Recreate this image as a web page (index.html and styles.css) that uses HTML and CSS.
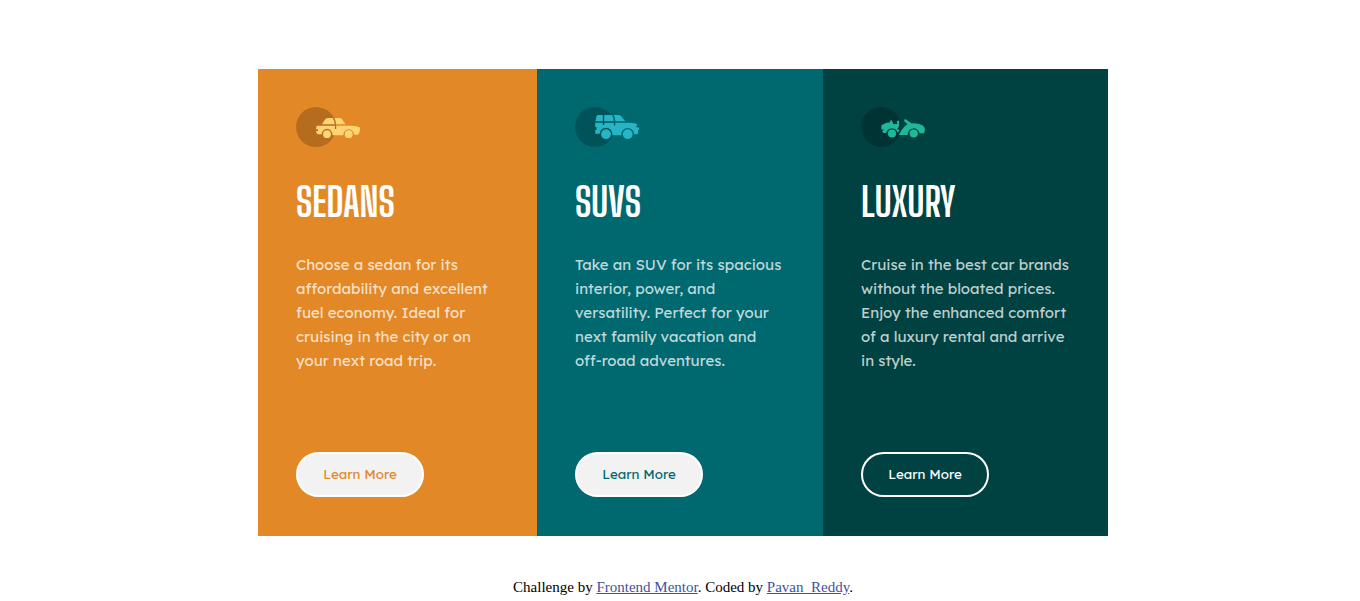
FILE: index.html
```html
<!DOCTYPE html>
<html lang="en">
<head>
<meta charset="UTF-8">
<meta name="viewport" content="width=device-width, initial-scale=1">
<title>3-column preview card</title>
<link rel="stylesheet" href="styles.css">
</head>
<body>
<main class="cards">
  <section class="card sedans">
    <svg class="icon" width="64" height="40" viewBox="0 0 64 40" aria-hidden="true">
      <circle cx="20" cy="20" r="20" fill="#000" opacity=".2"/>
      <g fill="#ffd473">
        <path d="M26 17.3 29 12.6Q30 11 32 11H36.6Q38.5 13.5 38.7 17.3ZM38.6 11H43.5Q45.3 11 46.3 12.5L49.4 17.3H40.2Q40.2 14 38.6 11ZM20.6 18.8H38.9V22H40.3V18.8H56Q61 19 63.3 20.2Q64.5 21 64 22.5L63 26.5Q62.7 27.7 61 27.7H58.1A5.4 5.4 0 0 0 47.3 27.7V28.3H36.4V27.2A5.4 5.4 0 0 0 25.6 27.2H22Q20.5 26.7 20.2 25V24H22V22.3H20Z"/>
        <circle cx="31" cy="27.2" r="3.9"/><circle cx="52.7" cy="27.2" r="3.9"/>
      </g>
    </svg>
    <h1 class="title">SEDANS</h1>
    <p class="text">Choose a sedan for its affordability and excellent fuel economy. Ideal for cruising in the city or on your next road trip.</p>
    <button class="more" type="button">Learn More</button>
  </section>
  <section class="card suvs">
    <svg class="icon" width="64" height="40" viewBox="0 0 64 40" aria-hidden="true">
      <circle cx="20" cy="20" r="20" fill="#000" opacity=".2"/>
      <g fill="#26b5c4">
        <path d="M22.7 8H27.8V14.2H20.5L21.5 9.5Q21.8 8 22.7 8ZM29.2 8H36.8Q38.6 10.5 38.8 14.2H29.2ZM38.6 8H43.5Q45 8 46 9L50.3 14.2H40.3Q40.3 10.5 38.6 8ZM20.2 15.8H27.8V18H29.2V15.8H38.9V18.5H40.3V15.8H55Q60 16 62.5 17.3L61.5 18.5V20.5H64V23H63V26Q63 27.3 61.5 27.3H59A6.3 6.3 0 0 0 46.4 27.3V28.3H37.3V27.2A6.3 6.3 0 0 0 24.7 26.7H20.2V23H21.5V20H20.2Z"/>
        <circle cx="31" cy="27.2" r="4.9"/><circle cx="52.7" cy="27.2" r="4.9"/>
      </g>
    </svg>
    <h1 class="title">SUVS</h1>
    <p class="text">Take an SUV for its spacious interior, power, and versatility. Perfect for your next family vacation and off-road adventures.</p>
    <button class="more" type="button">Learn More</button>
  </section>
  <section class="card luxury">
    <svg class="icon" width="64" height="40" viewBox="0 0 64 40" aria-hidden="true">
      <circle cx="20" cy="20" r="20" fill="#000" opacity=".2"/>
      <g fill="#1eb89b">
        <path d="M20.6 18Q25 15.3 29.3 15.3L28.8 14Q30.5 12.5 31.4 14.5L32.2 17H36.4L35.8 14.4Q37.4 12.6 38.2 14.5V18Q38 20.8 36.2 22Q37.6 22.4 38.6 23.2L36.8 26A6 6 0 0 0 25.2 26H22.5L21 24.5 23 22.5H20.2Z"/>
        <path d="M44.3 12 50.8 16.4Q57 16 61.5 18.3Q63.8 19.8 64 23L63 26.3H58.6A6 6 0 0 0 46.7 27.2V28H37.6L41 22.6Q43 19 46.5 17.3L43.2 14.2Q43 12.4 44.3 12Z"/>
        <circle cx="31" cy="26.5" r="4.1"/><circle cx="52.7" cy="26.5" r="4.1"/>
      </g>
    </svg>
    <h1 class="title">LUXURY</h1>
    <p class="text">Cruise in the best car brands without the bloated prices. Enjoy the enhanced comfort of a luxury rental and arrive in style.</p>
    <button class="more" type="button">Learn More</button>
  </section>
</main>
<footer class="attribution">
  Challenge by <a href="https://www.frontendmentor.io">Frontend Mentor</a>.
  Coded by <a href="#">Pavan_Reddy</a>.
</footer>
</body>
</html>
```
FILE: styles.css
```css
* {
  box-sizing: border-box;
}

body {
  margin: 0;
  padding: 69px 0 0 6px;
  background: #fff;
  font-family: "Liberation Serif", serif;
}

.cards {
  display: grid;
  grid-template-columns: 279fr 286fr 285fr;
  max-width: 850px;
  margin: 0 auto;
}

.card {
  display: flex;
  flex-direction: column;
  align-items: flex-start;
  padding: 38px 37px 39px 38px;
}

.sedans {
  background: #e38826;
  color: #e38826;
}

.suvs {
  background: #006970;
  color: #006970;
}

.luxury {
  background: #004241;
  color: #fff;
}

.icon {
  display: block;
}

.title {
  margin: 31px 0 27px;
  color: #fff;
  font-family: "Big Shoulders Display", "Liberation Sans Narrow", sans-serif;
  font-size: 40px;
  font-weight: 700;
  line-height: 48px;
}

.text {
  margin: 0 0 79px;
  color: rgba(255, 255, 255, 0.75);
  font-family: "Lexend Deca", Inter, sans-serif;
  font-size: 15px;
  line-height: 24px;
}

.more {
  width: 128px;
  height: 45px;
  margin-top: auto;
  padding: 0 0 1px;
  border: 2px solid #fff;
  border-radius: 23px;
  background: #f2f2f2;
  color: inherit;
  font-family: "Lexend Deca", Inter, sans-serif;
  cursor: pointer;
}

.luxury .more {
  background: transparent;
}

.attribution {
  margin-top: 42px;
  font-size: 15px;
  line-height: 18px;
  text-align: center;
}

.attribution a {
  color: #3e52a3;
}

@media (max-width: 700px) {
  .cards {
    grid-template-columns: 1fr;
  }
}
```
